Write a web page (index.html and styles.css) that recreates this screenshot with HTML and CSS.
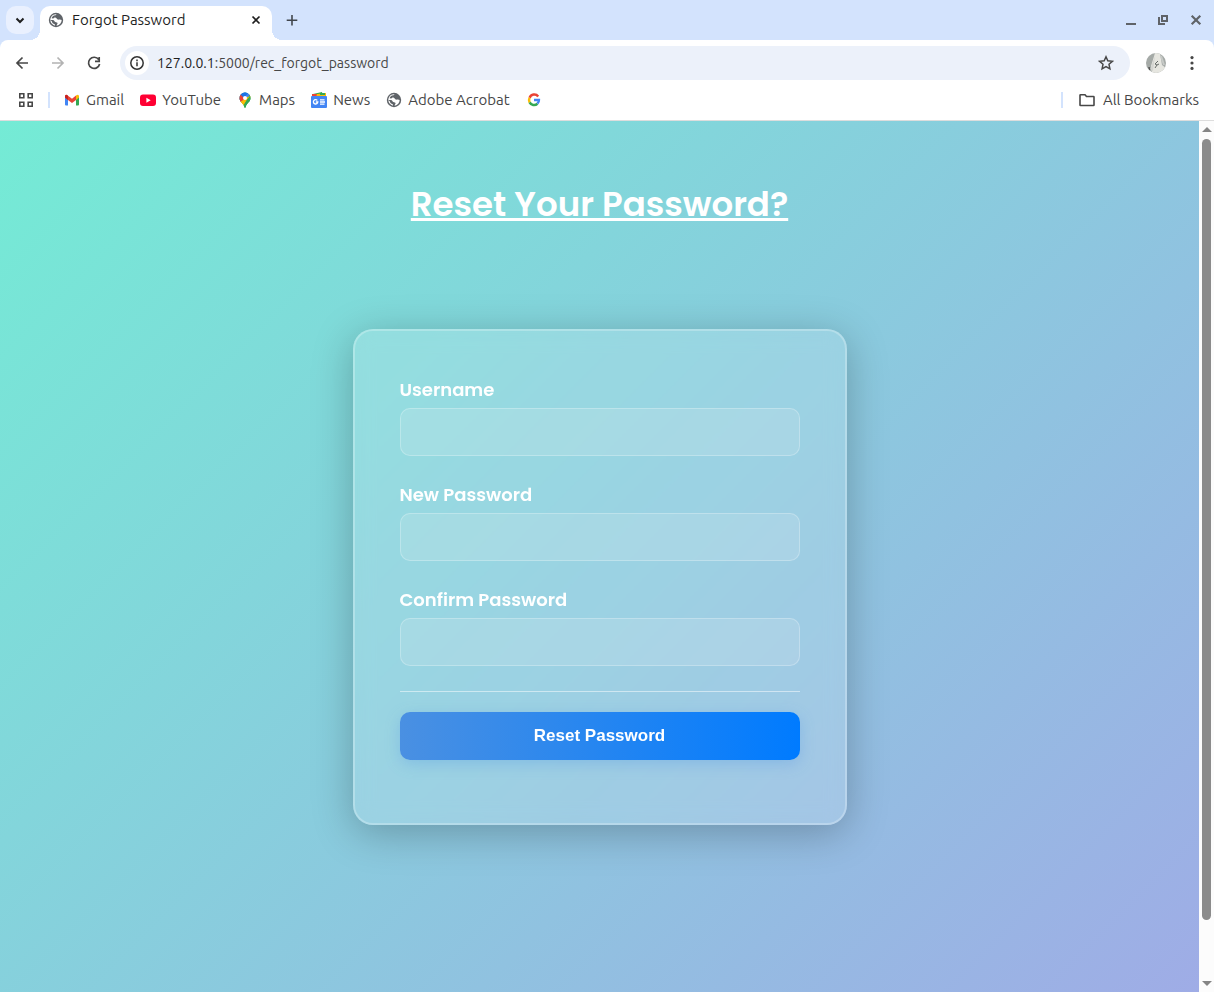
FILE: index.html
```html
<!DOCTYPE html>
<html lang="en">
<head>
<meta charset="utf-8">
<meta name="viewport" content="width=device-width, initial-scale=1">
<title>Forgot Password</title>
<link rel="stylesheet" href="styles.css">
</head>
<body>
<svg class="defs" aria-hidden="true">
  <symbol id="globe" viewBox="0 0 16 16">
    <circle cx="8" cy="8" r="7.200" fill="#5f6368"/>
    <path d="M9.500 2.300C7.500 2.600 6.600 3.600 6.900 4.900C7.200 5.900 8.300 5.600 8.700 6.500C9.100 7.500 10.200 7.900 11.200 7.500C12.200 7.200 12.800 7.500 13.700 7.900C13.600 10.800 11.600 13.200 8.700 13.700C8.400 12.700 9.600 12.200 9.600 11.300C9.500 10.300 8.300 10.500 7.300 10C6.300 9.500 6.200 8.300 5 8.100H2.300C2.300 5 4.600 2.300 7.600 2.200Z" fill="#fff"/>
    <path d="M3.600 6.200C4.200 4.500 5.400 3.500 6.900 3.200L7 5.200L5.200 6.600Z" fill="#5f6368"/>
    <path d="M2.300 8.100C2.400 10.800 4.200 13 6.900 13.700L6.800 12.300C5 11.800 4 10.700 3.800 9.200Z" fill="#fff"/>
  </symbol>
</svg>

<header class="browser">
  <div class="tabstrip">
    <button class="tab-search" aria-label="Search tabs">
      <svg class="icon" viewBox="0 0 16 16"><path d="M4.500 6.500 8 10l3.500-3.500" fill="none" stroke="#1f1f1f" stroke-width="2"/></svg>
    </button>
    <div class="tab">
      <svg class="icon"><use href="#globe"/></svg>
      <span class="tab-title">Forgot Password</span>
      <button class="plain" aria-label="Close tab">
        <svg class="icon" viewBox="0 0 16 16"><path d="m4.500 4.500 7 7m0-7-7 7" stroke="#1f1f1f" stroke-width="1.700"/></svg>
      </button>
    </div>
    <button class="plain new-tab" aria-label="New tab">
      <svg class="icon" viewBox="0 0 16 16"><path d="M8 3v10.500M2.700 8.200h10.600" stroke="#41464d" stroke-width="1.600"/></svg>
    </button>
    <div class="window-controls">
      <button class="plain" aria-label="Minimize"><svg class="icon" viewBox="0 0 16 16"><path d="M2 12h10" stroke="#5f6368" stroke-width="2"/></svg></button>
      <button class="plain" aria-label="Restore"><svg class="icon" viewBox="0 0 16 16"><path d="M6 4h5v5H6zM3 5v7h6" fill="none" stroke="#5f6368" stroke-width="2"/></svg></button>
      <button class="plain" aria-label="Close window"><svg class="icon" viewBox="0 0 16 16"><path d="m3.700 3.700 8.600 8.600m0-8.600-8.600 8.600" stroke="#5f6368" stroke-width="2.200"/></svg></button>
    </div>
  </div>

  <div class="toolbar">
    <nav class="history" aria-label="History">
      <button class="plain" aria-label="Back"><svg class="icon" viewBox="0 0 16 16"><path d="M14 8H3m5.500-5.500L3 8l5.500 5.500" fill="none" stroke="#474747" stroke-width="1.700"/></svg></button>
      <button class="plain" aria-label="Forward"><svg class="icon" viewBox="0 0 16 16"><path d="M2 8h11M7.500 2.500 13 8l-5.500 5.500" fill="none" stroke="#b3b3b3" stroke-width="1.700"/></svg></button>
      <button class="plain" aria-label="Reload"><svg class="icon" viewBox="0 0 16 16"><path d="M12.700 4.600A5.600 5.600 0 1 0 13.600 9M13.200 2v4.300H9" fill="none" stroke="#474747" stroke-width="1.700"/></svg></button>
    </nav>
    <div class="address">
      <button class="site-info" aria-label="Site information"><svg class="icon" viewBox="0 0 16 16"><circle cx="8" cy="8" r="6.200" fill="none" stroke="#333" stroke-width="1.500"/><path d="M8 7.200v4M8 4.600v1.600" stroke="#333" stroke-width="1.500"/></svg></button>
      <div class="url"><span class="host">127.0.0.1</span>:5000/rec_forgot_password</div>
      <button class="plain" aria-label="Bookmark this page"><svg class="icon" viewBox="0 0 16 16"><path d="m8 1.800 1.800 4 4.600.500-3.400 3 .900 4.500L8 11.500l-3.900 2.300.900-4.500-3.400-3 4.600-.500z" fill="none" stroke="#474747" stroke-width="1.500"/></svg></button>
    </div>
    <button class="plain" aria-label="Profile">
      <svg class="avatar" viewBox="0 0 20 20"><clipPath id="round"><circle cx="10" cy="10" r="10"/></clipPath><g clip-path="url(#round)"><path d="M0 0h20v20H0z" fill="#a5aaa7"/><path d="M9 0h5l2 12 4 3-3 5H6L5 13z" fill="#e6e6e0"/><path d="m4 17 5-14-2 15z" fill="#d4d5d1"/><path d="m3 14 1 3-1-1z" stroke="#555"/><path d="m12 8-3 3 2 1-2 3M11 12l2-1" fill="none" stroke="#666b68"/><path d="m15 3 3 9" fill="none" stroke="#c7cac7" stroke-width="2"/></g></svg>
    </button>
    <button class="plain" aria-label="Menu"><svg class="icon" viewBox="0 0 16 16"><g fill="#474747"><circle cx="8" cy="2.600" r="1.600"/><circle cx="8" cy="8" r="1.600"/><circle cx="8" cy="13.400" r="1.600"/></g></svg></button>
  </div>

  <nav class="bookmarks" aria-label="Bookmarks">
    <button class="plain" aria-label="Apps"><svg class="icon" viewBox="0 0 16 16"><path d="M1.800 1.800h4v4h-4zM10.200 1.800h4v4h-4zM1.800 10.200h4v4h-4zM10.200 10.200h4v4h-4z" fill="none" stroke="#474747" stroke-width="1.600"/></svg></button>
    <span class="separator"></span>
    <a class="bookmark" href="#"><svg class="icon" viewBox="0 0 16 16"><path d="M1 4v8.500q0 1 1 1h2V6z" fill="#4285f4"/><path d="M12 6v7.500h2q1 0 1-1V4z" fill="#34a853"/><path d="M12 3.600 13 3q2-.8 2 1.500v1L12 8z" fill="#fbbc04"/><path d="M1 5.500v-1Q1 2.200 3 3l5 3.800 4-3.200V8l-4 3-4-3z" fill="#ea4335"/><path d="M1 4.500Q1 2.200 3 3l1 .800V8L1 5.500z" fill="#c5221f"/></svg>Gmail</a>
    <a class="bookmark" href="#"><svg class="icon" viewBox="0 0 16 16"><rect y="2.500" width="16" height="11.500" rx="3" fill="#ff0033"/><path d="m6.400 5.700 4.300 2.500-4.300 2.500z" fill="#fff"/></svg>YouTube</a>
    <a class="bookmark" href="#"><svg class="icon" viewBox="0 0 16 16"><clipPath id="pin"><path d="M8 .5a5.500 5.500 0 0 1 5.500 5.700C13.500 10 9.500 11 8.800 14.800c-.2 1.200-1.400 1.200-1.600 0C6.500 11 2.500 10 2.500 6.200A5.500 5.500 0 0 1 8 .5z"/></clipPath><g clip-path="url(#pin)"><path d="M0 0h16v16H0z" fill="#34a853"/><path d="m0 14 14-14v5L4 16z" fill="#fbbc04"/><path d="M0 0h16v3L8 6l-5 6H0z" fill="#4285f4"/><path d="M0 1h4l5 5-7 6z" fill="#ea4335"/><path d="m3 2 4 4 5-6H6z" fill="#1a73e8"/><path d="m13 2 3 3v11H5z" fill="#34a853"/><path d="m13 4-8 9-2-3z" fill="#fbbc04"/></g><circle cx="8" cy="6" r="2" fill="#fff"/></svg>Maps</a>
    <a class="bookmark" href="#"><svg class="icon" viewBox="0 0 16 16"><path d="M2 2 11 0l1 5H3z" fill="#34a853"/><path d="M1 2h6v4H1z" fill="#ea4335"/><path d="m6 2 9-1v5H5z" fill="#fbbc04"/><path d="M9 1h5v2H9z" fill="#34a853"/><rect y="4" width="16" height="12" rx="1" fill="#4285f4"/><path d="M6.300 8.400A2.200 2.200 0 1 0 6.800 10H4.800M9 7.800h4.500M9 10h5M9 12.200h4.500" fill="none" stroke="#fff" stroke-width="1.300"/></svg>News</a>
    <a class="bookmark" href="#"><svg class="icon"><use href="#globe"/></svg>Adobe Acrobat</a>
    <a class="bookmark" href="#" aria-label="Google"><svg class="icon" viewBox="0 0 16 16"><g fill="none" stroke-width="2.500"><path d="M12.200 4.400A5 5 0 0 0 3.600 5.700" stroke="#ea4335"/><path d="M3.600 5.700a5 5 0 0 0 0 4.600" stroke="#fbbc04"/><path d="M3.600 10.300a5 5 0 0 0 7.800 1.400" stroke="#34a853"/><path d="M11.400 11.700A4.800 4.800 0 0 0 12.900 8.100H8" stroke="#4285f4"/></g></svg></a>
    <div class="all-bookmarks">
      <span class="separator"></span>
      <a class="bookmark" href="#"><svg class="icon" viewBox="0 0 16 16"><path d="M1 3.200Q1 2.700 1.500 2.700H6l1.500 1.800h7q.5 0 .5.500v8q0 .5-.5.500h-13Q1 13.500 1 13z" fill="none" stroke="#474747" stroke-width="1.600"/></svg>All Bookmarks</a>
    </div>
  </nav>
</header>

<div class="viewport">
  <main class="page">
    <h1 class="heading">Reset Your Password?</h1>
    <form class="card">
      <div class="field">
        <label for="username">Username</label>
        <input id="username" type="text">
      </div>
      <div class="field">
        <label for="new-password">New Password</label>
        <input id="new-password" type="password">
      </div>
      <div class="field">
        <label for="confirm-password">Confirm Password</label>
        <input id="confirm-password" type="password">
      </div>
      <hr class="divider">
      <button class="submit" type="submit">Reset Password</button>
    </form>
  </main>
  <div class="scrollbar" aria-hidden="true">
    <svg class="arrow" viewBox="0 0 10 5"><path d="M0 5 5 0l5 5z" fill="#858585"/></svg>
    <div class="track"><div class="thumb"></div></div>
    <svg class="arrow" viewBox="0 0 10 5"><path d="m0 0 5 5 5-5z" fill="#858585"/></svg>
  </div>
</div>
</body>
</html>
```
FILE: styles.css
```css
* { box-sizing: border-box; }

body {
  margin: 0;
  height: 100vh;
  display: flex;
  flex-direction: column;
  overflow: hidden;
  font-family: Ubuntu, "Noto Sans", sans-serif;
  font-size: 15px;
  line-height: 18px;
  color: #474747;
}

.defs { position: absolute; width: 0; height: 0; }
.icon { display: block; flex: none; width: 16px; height: 16px; }

.plain {
  display: block;
  padding: 0;
  border: 0;
  background: none;
}

.browser { flex: none; background: #d3e3fd; }

.tabstrip {
  display: flex;
  align-items: center;
  height: 40px;
  padding: 0 10px 0 6px;
}
.tab-search {
  display: grid;
  place-items: center;
  width: 28px;
  height: 28px;
  padding: 0;
  border: 0;
  border-radius: 10px;
  background: #e9f0fe;
}
.tab {
  position: relative;
  display: flex;
  align-items: center;
  align-self: flex-end;
  gap: 8px;
  width: 232px;
  height: 34px;
  margin-left: 6px;
  padding: 0 8px 6px;
  border-radius: 10px 10px 0 0;
  background: #fff;
  color: #1f1f1f;
}
.tab::before,
.tab::after {
  content: "";
  position: absolute;
  bottom: 0;
  width: 10px;
  height: 10px;
}
.tab::before {
  right: 100%;
  background: radial-gradient(circle at 0 0, transparent 10px, #fff 10px);
}
.tab::after {
  left: 100%;
  background: radial-gradient(circle at 100% 0, transparent 10px, #fff 10px);
}
.tab-title { flex: 1; }
.new-tab { margin-left: 12px; }
.window-controls { display: flex; gap: 16px; margin-left: auto; }

.toolbar {
  display: flex;
  align-items: center;
  gap: 16px;
  padding: 6px 14px 0;
  border-radius: 8px 8px 0 0;
  background: #fff;
}
.history { display: flex; gap: 20px; margin-right: 2px; }
.address {
  flex: 1;
  display: flex;
  align-items: center;
  gap: 8px;
  height: 34px;
  padding: 0 16px 0 5px;
  border-radius: 17px;
  background: #ecf1fa;
}
.site-info {
  display: grid;
  place-items: center;
  width: 24px;
  height: 24px;
  padding: 0;
  border: 0;
  border-radius: 50%;
  background: #fff;
}
.url { flex: 1; font-size: 14px; }
.host { color: #1f1f1f; }
.avatar { display: block; width: 20px; height: 20px; margin-right: 2px; }

.bookmarks {
  display: flex;
  align-items: center;
  gap: 16px;
  height: 41px;
  padding: 0 15px 0 18px;
  border-bottom: 1px solid #ddd;
  background: #fff;
}
.separator { width: 2px; height: 16px; background: #d3e3fd; }
.bookmarks > .separator { margin: 0 -2px; }
.bookmark {
  display: flex;
  align-items: center;
  gap: 6px;
  color: inherit;
  text-decoration: none;
}
.all-bookmarks {
  display: flex;
  align-items: center;
  gap: 16px;
  margin-left: auto;
}
.all-bookmarks .bookmark { gap: 8px; }

.viewport { flex: 1; display: flex; min-height: 0; }

.page {
  flex: 1;
  display: flex;
  flex-direction: column;
  align-items: center;
  padding: 60px 16px;
  background: linear-gradient(135deg, #74ebd5, #9face6);
  color: #fff;
  font-family: Poppins, Inter, sans-serif;
}
.heading {
  margin: 0 0 102px;
  font-size: 34px;
  font-weight: 600;
  line-height: 46px;
  text-decoration: underline;
  text-decoration-thickness: 3px;
  text-underline-offset: 2px;
  text-decoration-skip-ink: none;
}
.card {
  width: 100%;
  max-width: 494px;
  padding: 45px 45px 63px;
  border: 2px solid rgba(255, 255, 255, 0.25);
  border-radius: 20px;
  background: rgba(255, 255, 255, 0.15);
  box-shadow: 0 8px 40px rgba(0, 0, 0, 0.25);
  backdrop-filter: blur(10px);
}
.field { margin-bottom: 25px; }
.field label {
  display: block;
  margin-bottom: 5px;
  font-size: 18px;
  font-weight: 600;
  line-height: 27px;
}
.field input {
  display: block;
  width: 100%;
  height: 48px;
  padding: 0 12px;
  border: 1px solid rgba(255, 255, 255, 0.25);
  border-radius: 10px;
  background: rgba(240, 240, 240, 0.15);
  color: #fff;
  font-size: 16px;
}
.divider {
  height: 1px;
  margin: 0 0 20px;
  border: 0;
  background: rgba(255, 255, 255, 0.5);
}
.submit {
  display: block;
  width: 100%;
  height: 48px;
  border: 0;
  border-radius: 10px;
  background: linear-gradient(90deg, #4a90e2, #007bff);
  box-shadow: 0 4px 15px rgba(74, 144, 226, 0.3);
  color: #fff;
  font: bold 17px "Liberation Sans", sans-serif;
}

.scrollbar {
  flex: none;
  display: flex;
  flex-direction: column;
  align-items: center;
  gap: 7px;
  width: 15px;
  padding: 6px 0;
  background: #fcfcfc;
}
.arrow { width: 10px; height: 5px; }
.track { flex: 1; width: 9px; }
.thumb { height: 93.5%; border-radius: 5px; background: #8b8b8b; }
```
